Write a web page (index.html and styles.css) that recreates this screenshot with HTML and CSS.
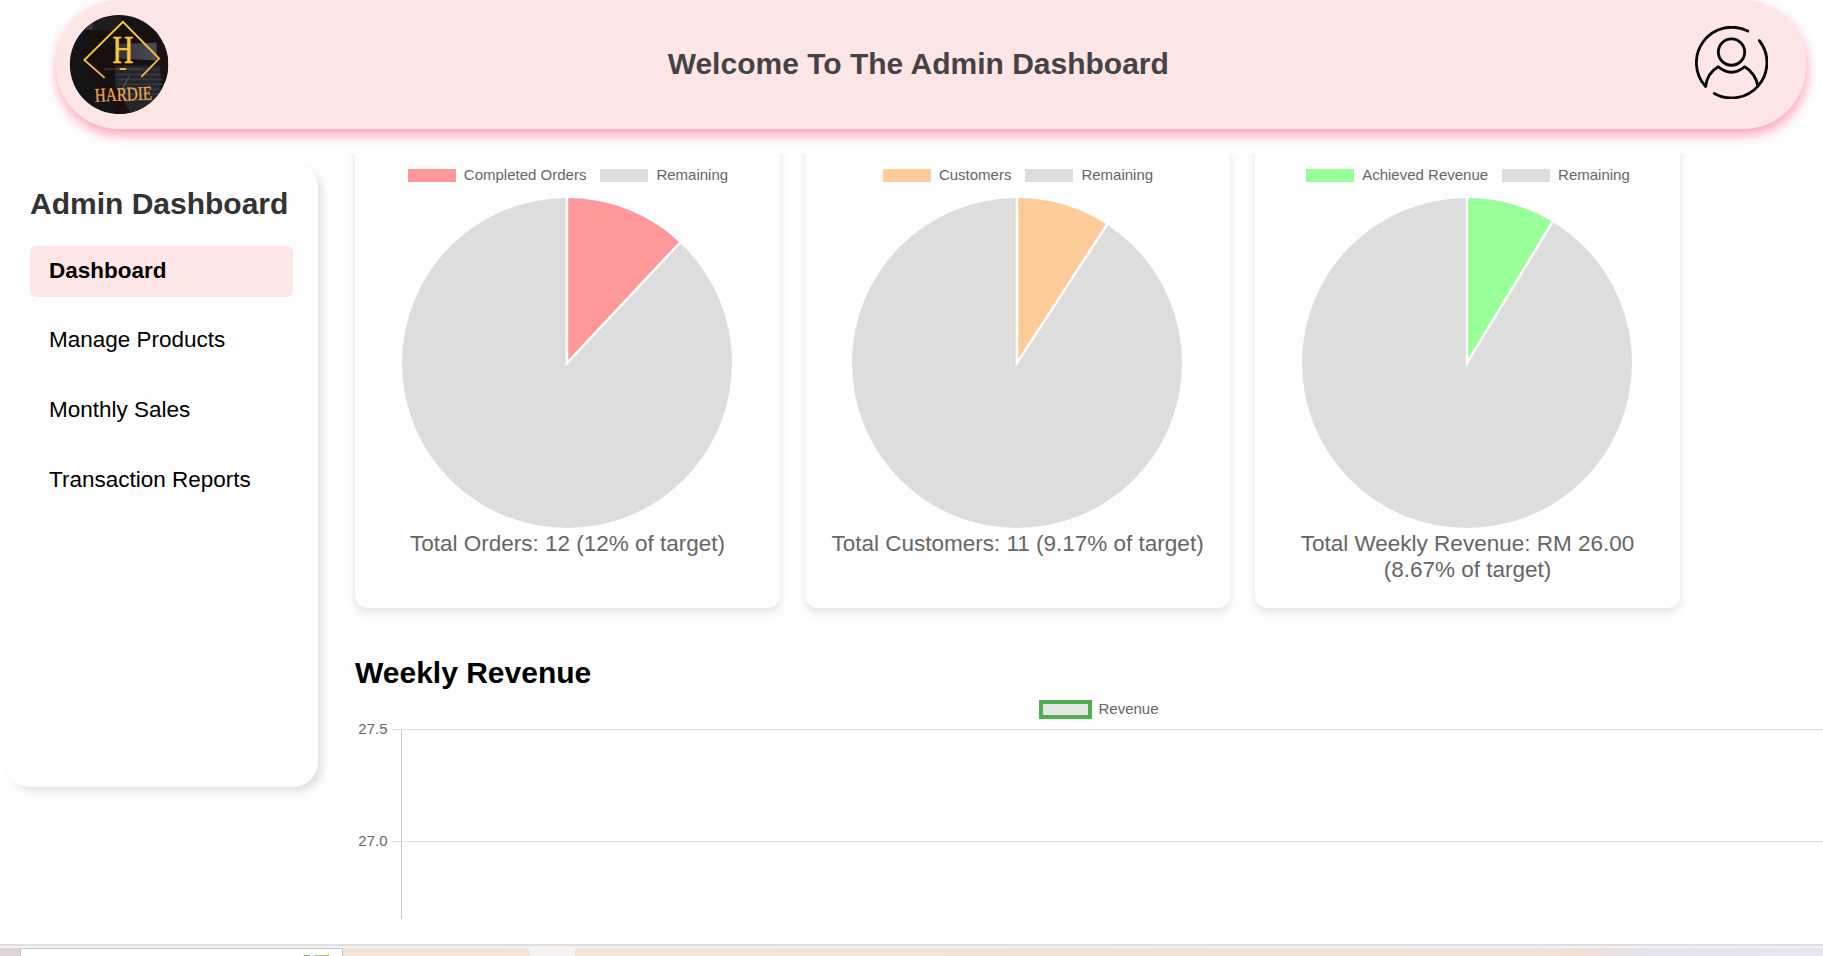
FILE: index.html
```html
<!DOCTYPE html>
<html lang="en">
<head>
<meta charset="utf-8">
<title>Admin Dashboard</title>
<link rel="stylesheet" href="styles.css">
</head>
<body>
<header class="header">
  <svg class="logo" viewBox="0 0 100 100">
    <defs>
      <clipPath id="disc"><ellipse cx="50" cy="50" rx="49.7" ry="50"/></clipPath>
      <linearGradient id="gold" x1="0" y1="0" x2="0" y2="1"><stop offset="0" stop-color="#ffc93a"/><stop offset="1" stop-color="#f0b548"/></linearGradient>
      <linearGradient id="glass" x1="0" y1="0" x2="1" y2="0"><stop offset="0" stop-color="#33343c"/><stop offset="1" stop-color="#4a4b56"/></linearGradient>
    </defs>
    <g clip-path="url(#disc)">
      <rect width="100" height="100" fill="#141416"/>
      <path d="M4 14L24 4V15H12Z" fill="#34363f"/>
      <path d="M24 2H52V16H24Z" fill="#1d1d20"/>
      <path d="M18 16H90V60L60 100L46 60L18 66Z" fill="#17100f"/>
      <path d="M50 29L88 28V46L50 44Z" fill="url(#glass)"/>
      <path d="M46 51H92V100H62L46 72Z" fill="#25262a"/>
      <path d="M47 55H92M47 60H94M48 65H94M49 70H94M50 75H94M52 80H94M54 86H94" stroke="#37383d" stroke-width="1.6"/>
      <path d="M60 62L54 74" stroke="#4c4c52" stroke-width="1.5"/>
      <path d="M26 66L46 72L62 100H46V88L26 74Z" fill="#1a0f0d"/>
      <path d="M90 30L100 28V72L92 60Z" fill="#1c1212"/>
      <path d="M35 54.500H72" stroke="#65483e" stroke-width=".8"/>
      <path d="M51.500 54.500H56.500" stroke="#f0b646" stroke-width="2" stroke-linecap="round"/>
      <path d="M35.500 63.500L15 45.500L54 7L90.500 44L72.500 62.500" fill="none" stroke="url(#gold)" stroke-width="1.9"/>
      <text class="logo-letter" x="54" y="48" textLength="21" lengthAdjust="spacingAndGlyphs">H</text>
      <text class="logo-name" x="54.500" y="86.500" textLength="58" lengthAdjust="spacingAndGlyphs" transform="rotate(-2.500 54 82)">HARDIE</text>
    </g>
  </svg>
  <h1 class="title">Welcome To The Admin Dashboard</h1>
  <svg class="user" viewBox="0 0 72 72">
    <circle cx="36" cy="25.700" r="13"/>
    <path d="M52 5A34.900 34.900 0 0 0 10.500 59.700C11.500 51 16 44 23 40.200Q36 51 49 40.200C56 44 61 52 62 59.500M63.500 14.500A34.900 34.900 0 0 1 19 66.500"/>
  </svg>
</header>
<div class="layout">
  <aside class="sidebar">
    <h2 class="sidebar-title">Admin Dashboard</h2>
    <nav class="nav">
      <a class="nav-item active">Dashboard</a>
      <a class="nav-item">Manage Products</a>
      <a class="nav-item">Monthly Sales</a>
      <a class="nav-item">Transaction Reports</a>
    </nav>
  </aside>
  <main class="content">
    <section class="cards">
      <article class="card">
        <div class="legend"><i class="swatch orders"></i><span>Completed Orders</span><i class="swatch rest"></i><span>Remaining</span></div>
        <svg class="pie" viewBox="-166 -166 332 332"><circle class="pie-rest" r="165"/><path class="pie-orders" d="M0 0V-165A165 165 0 0 1 112.950 -120.280Z"/><path class="pie-line" d="M0 -166V0L113.600 -121"/></svg>
        <p class="caption">Total Orders: 12 (12% of target)</p>
      </article>
      <article class="card">
        <div class="legend"><i class="swatch customers"></i><span>Customers</span><i class="swatch rest"></i><span>Remaining</span></div>
        <svg class="pie" viewBox="-166 -166 332 332"><circle class="pie-rest" r="165"/><path class="pie-customers" d="M0 0V-165A165 165 0 0 1 89.930 -138.340Z"/><path class="pie-line" d="M0 -166V0L90.500 -139.200"/></svg>
        <p class="caption">Total Customers: 11 (9.17% of target)</p>
      </article>
      <article class="card">
        <div class="legend"><i class="swatch revenue"></i><span>Achieved Revenue</span><i class="swatch rest"></i><span>Remaining</span></div>
        <svg class="pie" viewBox="-166 -166 332 332"><circle class="pie-rest" r="165"/><path class="pie-revenue" d="M0 0V-165A165 165 0 0 1 85.530 -141.100Z"/><path class="pie-line" d="M0 -166V0L86 -142"/></svg>
        <p class="caption">Total Weekly Revenue: RM 26.00 (8.67% of target)</p>
      </article>
    </section>
    <h2 class="section-title">Weekly Revenue</h2>
    <div class="legend line-legend"><i class="swatch-line"></i><span>Revenue</span></div>
    <svg class="chart" width="1468" height="200">
      <text class="tick" x="32.500" y="14">27.5</text>
      <text class="tick" x="32.500" y="126">27.0</text>
      <path class="grid" d="M37 9.500H1468M37 121.500H1468"/>
      <path class="axis" d="M46.500 10V199"/>
    </svg>
  </main>
</div>
<footer class="strip">
  <div class="strip-edge"></div>
  <div class="strip-card"><svg width="26" height="3"><path d="M0 3L1 2L2 3Z" fill="#bbb"/><path d="M18 3L19 1H25V3Z" fill="#8fb56f"/><path d="M19 2H24" stroke="#69a86b"/></svg><svg width="16" height="3"><path d="M0 3L1 1H12L15 0V3H9V2H5V3Z" fill="#a9c96b"/></svg></div>
  <div class="strip-photo"><div class="strip-label"></div></div>
</footer>
</body>
</html>
```
FILE: styles.css
```css
* { box-sizing: border-box; }
body {
  margin: 0;
  height: 956px;
  display: flex;
  flex-direction: column;
  overflow: hidden;
  background: #fefefe;
  font-family: "Liberation Sans", Arial, sans-serif;
}
.header {
  height: 129px;
  margin: 0 17px 0 56px;
  padding: 0 38px 4px 13px;
  display: flex;
  flex: none;
  align-items: center;
  justify-content: space-between;
  background: #ffe6e6;
  border-radius: 62.500px;
  box-shadow: 1px 6px 12px #ffa3ba;
}
.logo { width: 100px; height: 99px; margin: 3px 0 0 -0.500px; }
.logo-letter { font: 39.500px "Liberation Serif", serif; text-anchor: middle; fill: #fbc63e; stroke: #fbc63e; stroke-width: .7; }
.logo-name { font: 19.500px "Liberation Serif", serif; text-anchor: middle; fill: #f0ac50; stroke: #f0ac50; stroke-width: .2; }
.title { margin: 3px 27px 0 0; font-size: 30px; color: #444; }
.user { width: 73px; height: 73px; fill: none; stroke: #080808; stroke-width: 2.800; stroke-linecap: round; stroke-linejoin: round; margin-top: -1px; }
.layout { display: flex; flex: none; height: 815px; }
.sidebar {
  width: 313px;
  height: 625px;
  margin: 33px 25px 0 5px;
  padding: 25px;
  flex: none;
  background: #fefefe;
  border-radius: 25px;
  box-shadow: 5px 5px 8px -1px rgba(0, 0, 0, .12);
}
.sidebar-title { margin: 0 0 25px; font-size: 30px; line-height: 34px; color: #333; white-space: nowrap; }
.nav { display: flex; flex-direction: column; gap: 18.700px; }
.nav-item { height: 51px; padding: 11.600px 19px; border-radius: 6px; font-size: 22.500px; line-height: 26px; color: #000; }
.active { background: #ffe6e6; font-weight: bold; }
.content { flex: none; width: 1480px; height: 790px; margin-top: 25px; padding-left: 12px; overflow: hidden; }
.cards { display: flex; gap: 25px; height: 470px; }
.card {
  width: 425px;
  height: 484px;
  margin-top: -30px;
  padding: 39px 20px 10px;
  background: #fefefe;
  border-radius: 12.500px;
  box-shadow: 0 5px 8px rgba(0, 0, 0, .1);
}
.legend { display: flex; justify-content: center; align-items: center; gap: 8px; height: 22px; font-size: 15px; color: #666; }
.swatch { width: 48px; height: 13px; margin-top: 3px; }
.swatch + span { margin-right: 6px; }
.swatch + span:last-child { margin-right: -1px; }
.orders { background: #f99; }
.customers { background: #fc9; }
.revenue { background: #9f9; }
.rest { background: #ddd; }
.pie { display: block; width: 332px; height: 332px; margin: 12px auto 0 26px; }
.pie-rest { fill: #ddd; }
.pie-orders { fill: #f99; }
.pie-customers { fill: #fc9; }
.pie-revenue { fill: #9f9; }
.pie-line { fill: none; stroke: #fff; stroke-width: 2.500; }
.caption { margin: 2px 0 0; text-align: center; font-size: 22.500px; line-height: 26px; color: #666; }
.section-title { margin: 32px 0 0; font-size: 30px; line-height: 34px; color: #000; }
.line-legend { gap: 6px; margin-top: 7px; height: 22px; padding-left: 20px; }
.swatch-line { width: 53px; height: 19px; margin-top: 3px; border: 4px solid #4caf50; background: #e5e5e5; }
.chart { display: block; margin-top: 1px; }
.tick { font-size: 15px; fill: #666; text-anchor: end; }
.grid { stroke: #e3e3e3; }
.axis { stroke: #c8c8c8; }
.strip {
  height: 12px;
  display: flex;
  flex: none;
  border-top: 2px solid #e0e0e0;
  box-shadow: inset 0 2px #f3f3f3;
  padding-top: 2px;
}
.strip-edge { width: 20px; background: #dfd5d7; }
.strip-card { display: flex; gap: 3px; width: 323px; border: 1px solid #c6c6c6; border-bottom: 0; background: #fff; padding: 5px 0 0 264px; }
.strip-photo { flex: 1; padding-left: 187px; background: linear-gradient(90deg, #f2e5d8 0, #f0e4da 80%, #efe0d6 84%, #e5e3ef 88%, #e7e6f2 100%); }
.strip-label { width: 45px; height: 8px; background: #f8f3ee; }
```
